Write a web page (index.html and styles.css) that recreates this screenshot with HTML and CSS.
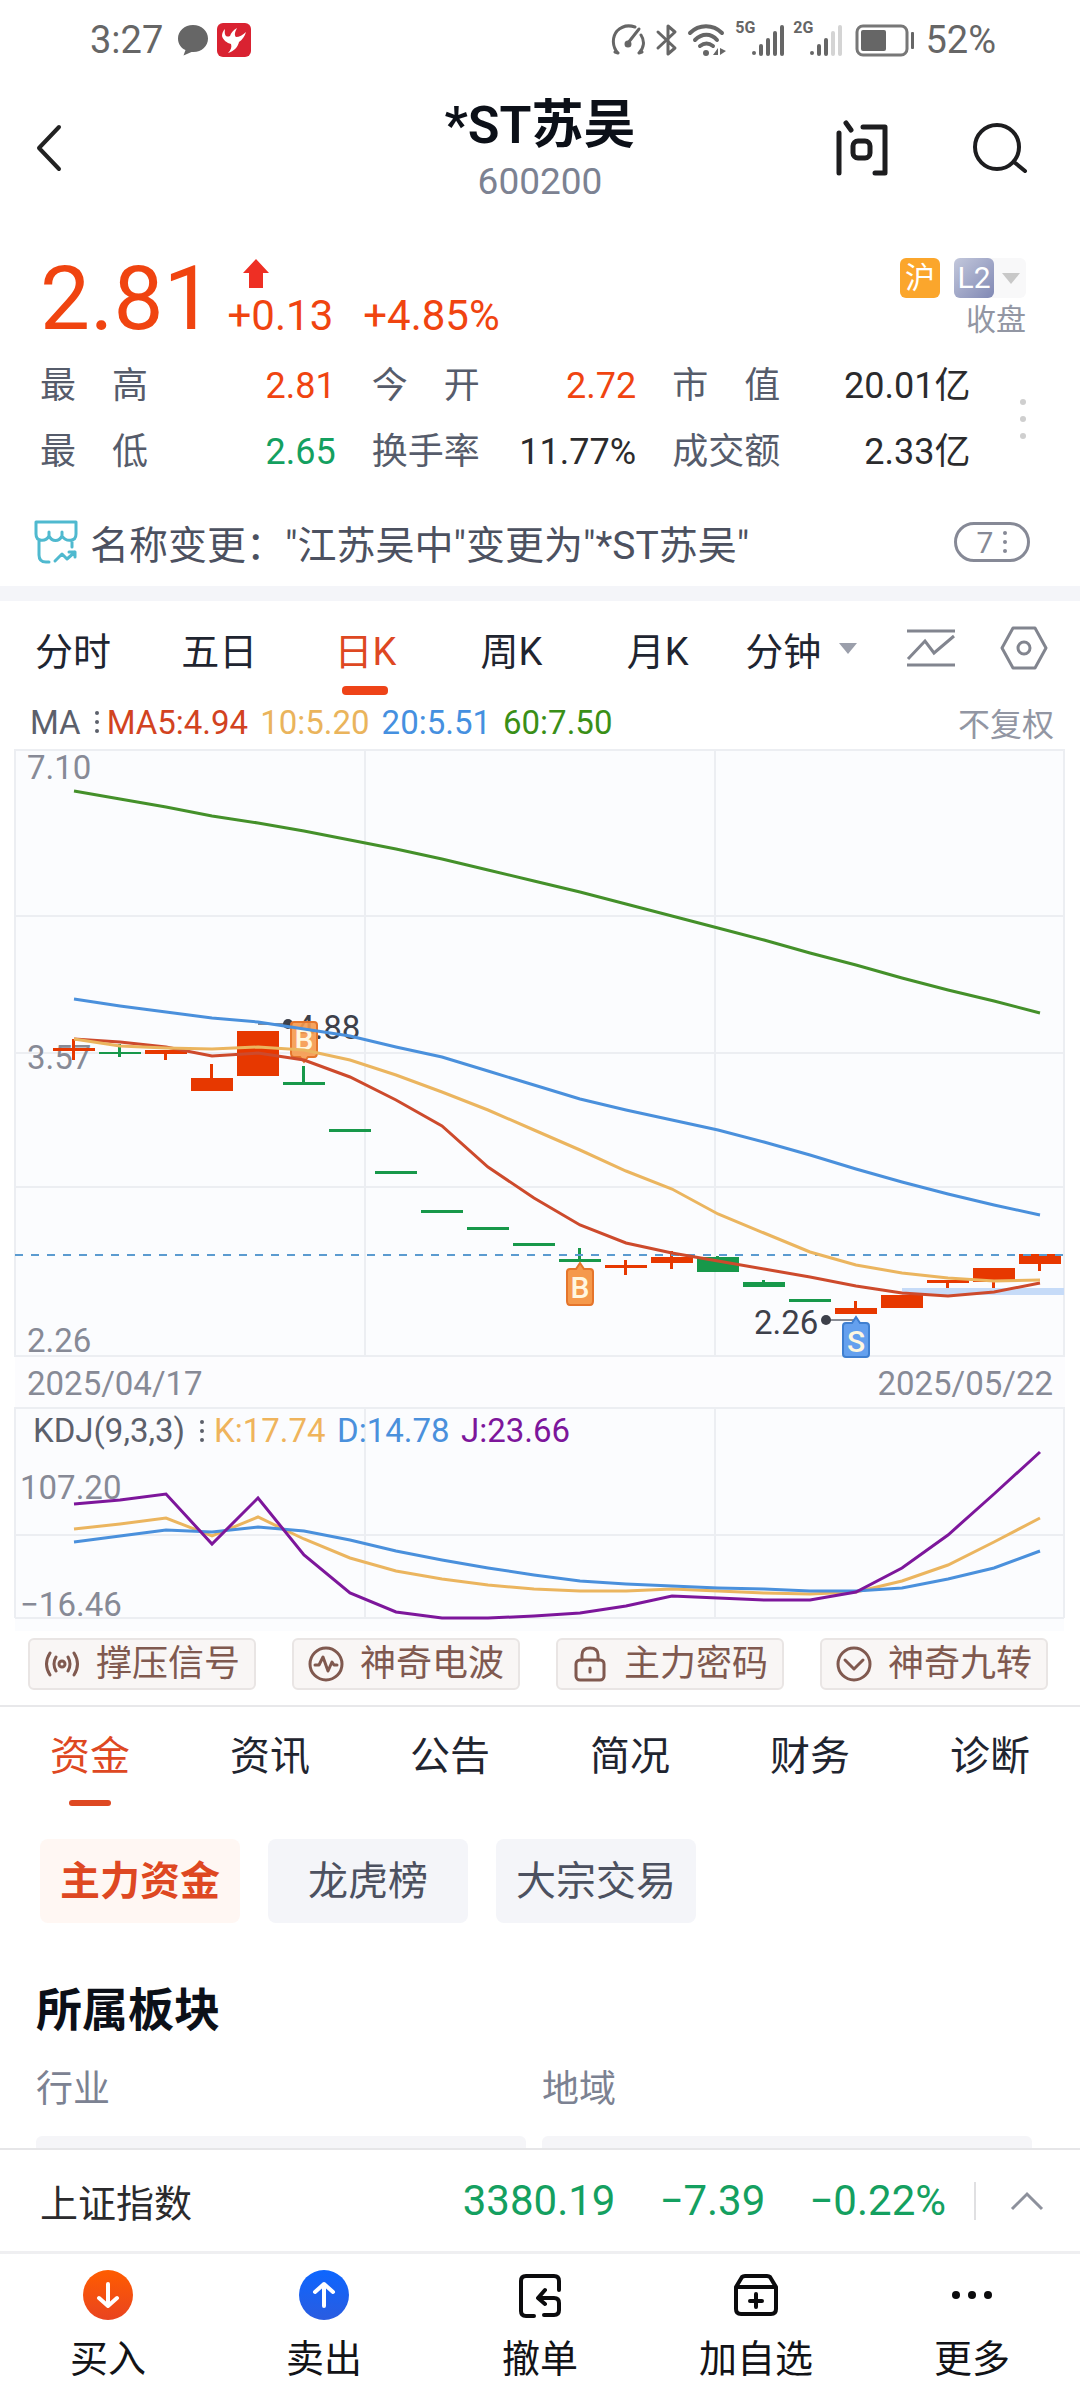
FILE: index.html
```html
<!DOCTYPE html>
<html lang="zh-CN">
<head>
  <meta charset="UTF-8" />
  <meta name="viewport" content="width=device-width, initial-scale=1.0" />
  <title>*ST苏吴 600200</title>
  <link rel="stylesheet" href="styles.css">
</head>
<body>
  <div class="app">
    <div class="status-bar">
      <span class="clock">3:27</span>
      <svg class="bubble" width="32" height="32" viewBox="0 0 32 32"><path d="M16 1C7.500 1 1 7 1 14.500C1 20 4 24 8.500 26L6.500 31.500L14.500 28C24 29 31 22.500 31 14.500C31 7 24.500 1 16 1Z" fill="#666"/></svg>
      <svg width="34" height="34" viewBox="0 0 34 34"><rect width="34" height="34" rx="6" fill="#d92231"/><path d="M8 6C7 12 9 15 13 13C14 10 16 7 20 5C18 9 17 12 19 14C22 14 26 12 29 9C28 13 25 17 22 19C21 24 17 28 11 30C14 27 15 24 14 21C10 20 6 17 5 13C5 10 6 8 8 6Z" fill="#fff"/></svg>

      <div class="status-icons">
        <svg class="gauge" width="34" height="34" viewBox="0 0 34 34" fill="none" stroke="#666" stroke-width="3" stroke-linecap="round"><path d="M7 30C1 24 1 14 6 8C11 3 18 2 24 4M30 12C34 18 33 25 28 30M7 30L4 29M28 30L31 29"/><path d="M17 20L28 6"/><circle cx="17" cy="21" r="3" fill="#666" stroke="none"/><circle cx="17" cy="21" r="2"/></svg>
        <svg width="24" height="34" viewBox="0 0 24 34" fill="none" stroke="#666" stroke-width="3" stroke-linejoin="round" stroke-linecap="round"><path d="M3 9L20 25L13 31V3L20 9L3 25"/></svg>
        <svg width="40" height="34" viewBox="0 0 40 34" fill="none" stroke="#666" stroke-width="4" stroke-linecap="round"><path d="M3 10C12 1 26 1 35 10M8 17C15 10 24 10 30 17M13 23C17 20 22 20 26 23"/><circle cx="19" cy="30" r="3" fill="#666" stroke="none"/><path d="M31 25V32H26ZM33 25V32L39 28Z" fill="#666" stroke="none"/></svg>
        <span class="net">5G</span>
        <svg width="34" height="34" viewBox="0 0 34 34" fill="#666"><circle cx="3" cy="30" r="2"/><rect x="8" y="21" width="4" height="12" rx="2"/><rect x="15" y="15" width="4" height="18" rx="2"/><rect x="22" y="8" width="4" height="25" rx="2"/><rect x="29" y="2" width="4" height="31" rx="2"/></svg>
        <span class="net net-second">2G</span>
        <svg width="34" height="34" viewBox="0 0 34 34" fill="#666"><circle cx="3" cy="30" r="2"/><rect x="8" y="21" width="4" height="12" rx="2"/><rect x="15" y="15" width="4" height="18" rx="2"/><rect x="22" y="8" width="4" height="25" rx="2" fill="#d4d4d4"/><rect x="29" y="2" width="4" height="31" rx="2" fill="#d4d4d4"/></svg>
        <svg class="battery" width="60" height="34" viewBox="0 0 60 34"><rect x="2" y="3" width="50" height="29" rx="6" fill="none" stroke="#777" stroke-width="3"/><rect x="6" y="7" width="25" height="21" rx="2" fill="#666"/><rect x="56" y="9" width="3" height="17" rx="1" fill="#666"/></svg>
        <span class="clock">52%</span>
      </div>
    </div>

    <header class="top-bar">
      <button type="button" class="icon-btn" aria-label="返回">
        <svg width="26" height="48" viewBox="0 0 26 48" fill="none" stroke="#222" stroke-width="4" stroke-linecap="round" stroke-linejoin="round"><path d="M23 3L3 24L23 45"/></svg>
      </button>
      <div class="title">
        <h1>*ST苏吴</h1>
        <p>600200</p>
      </div>
      <div class="top-actions">
        <button type="button" class="icon-btn" aria-label="问">
          <svg width="52" height="58" viewBox="0 0 52 58" fill="none" stroke="#1d1d1f" stroke-width="5" stroke-linecap="round" stroke-linejoin="round"><path d="M3 14V54M10 4L15 11M27 8H49V54H39"/><rect x="17" y="22" width="17" height="17" rx="5"/></svg>
        </button>
        <button type="button" class="icon-btn" aria-label="搜索">
          <svg width="56" height="56" viewBox="0 0 56 56" fill="none" stroke="#1d1d1f" stroke-width="4" stroke-linecap="round"><circle cx="25" cy="27" r="22"/><path d="M42 42L53 51"/></svg>
        </button>
      </div>
    </header>

    <main>
      <section class="quote">
        <div class="price-row">
          <span class="price">2.81</span>
          <div class="change">
            <svg width="28" height="32" viewBox="0 0 28 32"><path d="M14 1L27 15H21V30H7V15H1Z" fill="#ee2f24"/></svg>
            <div class="change-values"><span>+0.13</span><span>+4.85%</span></div>
          </div>
          <div class="market">
            <div class="badges">
              <span class="badge badge-sh">沪</span>
              <span class="badge-level"><span class="badge badge-l2">L2</span><i class="caret"></i></span>
            </div>
            <span class="market-state">收盘</span>
          </div>
        </div>
        <div class="stats-row">
          <table class="stats">
            <tr>
              <th>最　高</th><td class="up">2.81</td>
              <th>今　开</th><td class="up">2.72</td>
              <th>市　值</th><td>20.01亿</td>
            </tr>
            <tr>
              <th>最　低</th><td class="down">2.65</td>
              <th>换手率</th><td>11.77%</td>
              <th>成交额</th><td>2.33亿</td>
            </tr>
          </table>
          <div class="more-dots"><i></i><i></i><i></i></div>
        </div>
      </section>

      <section class="notice">
        <svg width="44" height="44" viewBox="0 0 44 44" fill="none" stroke="#4fb9cf" stroke-width="3" stroke-linecap="round" stroke-linejoin="round"><path d="M2 2H42V14C42 22 32 22 28 16V12M28 16C25 22 18 22 15 16V12M15 16C12 22 2 22 2 14V2M5 20V35Q5 42 12 42H15M38 20V27M21 41L28 34L33 39L41 32M35 32H41V37"/></svg>
        <p>名称变更："江苏吴中"变更为"*ST苏吴"</p>
        <button type="button" class="pill">7<span class="dots-v"><i></i><i></i><i></i></span></button>
      </section>

      <nav class="period-tabs">
        <button type="button">分时</button>
        <button type="button">五日</button>
        <button type="button" class="active">日K</button>
        <button type="button">周K</button>
        <button type="button">月K</button>
        <button type="button">分钟<i class="caret"></i></button>
        <button type="button" aria-label="指标">
          <svg width="50" height="40" viewBox="0 0 50 40" fill="none" stroke="#82858f" stroke-width="3"><path d="M1 3H49M1 37H49M2 31L19 13L28 25L48 8"/></svg>
        </button>
        <button type="button" aria-label="设置">
          <svg width="48" height="44" viewBox="0 0 48 44" fill="none" stroke="#82858f" stroke-width="3" stroke-linejoin="round"><path d="M13 2H35L46 22L35 42H13L2 22Z"/><circle cx="24" cy="22" r="6"/></svg>
        </button>
      </nav>

      <section class="chart">
        <div class="legend">
          <span>MA</span><span class="dots-v"><i></i><i></i><i></i></span>
          <span class="ma5">MA5:4.94</span>
          <span class="ma10">10:5.20</span>
          <span class="ma20">20:5.51</span>
          <span class="ma60">60:7.50</span>
          <span class="adjust">不复权</span>
        </div>

        <!-- daily candles, one every 46 units -->
        <svg class="plot" viewBox="0 750 1080 608">
          <rect x="15" y="750" width="1049" height="608" fill="#fbfcfe"/>
          <path class="grid" d="M15 751H1064M15 917H1064M15 1054H1064M15 1188H1064M15 1357H1064M15 750V1358M365 750V1358M715 750V1358M1064 750V1358"/>
          <text class="axis" x="27" y="780">7.10</text>
          <text class="axis" x="27" y="1070">3.57</text>
          <text class="axis" x="27" y="1353">2.26</text>

          <rect x="902" y="1289" width="162" height="7" fill="#c6dbf8"/>
          <path d="M258 1025H288M826 1321H858" stroke="#888b94" stroke-width="2"/>
          <circle cx="288" cy="1025" r="5" fill="#3d404a"/>
          <circle cx="826" cy="1321" r="5" fill="#3d404a"/>
          <text class="mark" x="296" y="1040">4.88</text>
          <text class="mark" x="754" y="1335">2.26</text>

          <g fill="#e73800">
            <path d="M53 1049h42v3h-42zM72 1040h3v21h-3z"/>
            <path d="M145 1051h42v4h-42zM164 1051h3v10h-3z"/>
            <path d="M191 1079h42v13h-42zM210 1065h3v14h-3z"/>
            <path d="M237 1032h42v45h-42z"/>
            <path d="M605 1266h42v3h-42zM624 1261h3v15h-3z"/>
            <path d="M651 1258h42v6h-42zM670 1252h3v18h-3z"/>
            <path d="M835 1309h42v6h-42zM854 1302h3v7h-3z"/>
            <path d="M881 1296h42v13h-42z"/>
            <path d="M927 1281h42v3h-42zM946 1284h3v5h-3z"/>
            <path d="M973 1269h42v14h-42zM992 1283h3v6h-3z"/>
            <path d="M1019 1255h42v10h-42zM1038 1265h3v7h-3z"/>
          </g>
          <g fill="#17984a">
            <path d="M99 1053h42v2h-42zM118 1045h3v13h-3z"/>
            <path d="M283 1083h42v3h-42zM302 1067h3v17h-3z"/>
            <path d="M329 1130h42v3h-42zM375 1172h42v3h-42zM421 1211h42v3h-42zM467 1228h42v3h-42zM513 1244h42v3h-42z"/>
            <path d="M559 1260h42v3h-42zM578 1249h3v12h-3z"/>
            <path d="M697 1258h42v15h-42zM716 1257h3v2h-3z"/>
            <path d="M743 1283h42v5h-42zM762 1281h3v3h-3z"/>
            <path d="M789 1300h42v3h-42z"/>
          </g>
          <path d="M15 1256H1064" stroke="#5b9bd0" stroke-width="2" stroke-dasharray="8 8"/>

          <g stroke="#e5752b" stroke-width="2">
            <path d="M294 1023H314Q317 1023 317 1026V1054Q317 1058 314 1058H308L304 1063L300 1058H294Q291 1058 291 1054V1026Q291 1023 294 1023Z" fill="#f5994c" fill-opacity="0.9"/>
            <path d="M570 1270H576L580 1264L584 1270H590Q593 1270 593 1273V1302Q593 1306 590 1306H570Q567 1306 567 1302V1273Q567 1270 570 1270Z" fill="#f5994c"/>
          </g>
          <path d="M846 1324H852L856 1318L860 1324H866Q869 1324 869 1327V1355Q869 1358 866 1358H846Q843 1358 843 1355V1327Q843 1324 846 1324Z" fill="#64a0ee" stroke="#3f7fd0" stroke-width="2"/>
          <text class="flag" x="304" y="1051">B</text>
          <text class="flag" x="580" y="1299">B</text>
          <text class="flag" x="856" y="1353">S</text>

          <polyline class="line-ma5" points="74,1040 120,1043 166,1048 212,1057 258,1054 304,1061 350,1078 396,1101 442,1127 488,1168 534,1199 580,1226 626,1244 672,1254 718,1262 764,1270 810,1278 856,1287 902,1294 948,1297 994,1293 1040,1284"/>
          <polyline class="line-ma10" points="74,1040 120,1047 166,1049 212,1050 258,1048 304,1051 350,1061 396,1076 442,1093 488,1111 534,1131 580,1151 626,1172 672,1190 718,1215 764,1234 810,1253 856,1266 902,1274 948,1279 994,1282 1040,1281"/>
          <polyline class="line-ma20" points="74,1000 120,1007 166,1013 212,1019 258,1023 304,1030 350,1037 396,1048 442,1058 488,1072 534,1086 580,1100 626,1111 672,1121 718,1131 764,1143 810,1156 856,1170 902,1183 948,1195 994,1206 1040,1216"/>
          <polyline class="line-ma60" points="74,792 120,800 166,808 212,817 258,824 304,832 350,841 396,850 442,860 488,871 534,882 580,893 626,905 672,917 718,929 764,941 810,954 856,966 902,979 948,991 994,1002 1040,1014"/>
        </svg>

        <div class="dates"><span>2025/04/17</span><span>2025/05/22</span></div>

        <svg class="plot" viewBox="0 1408 1080 224">
          <rect x="15" y="1408" width="1049" height="224" fill="#fbfcfe"/>
          <path class="grid" d="M15 1409H1064M15 1536H1064M15 1619H1064M15 1408V1619M365 1408V1619M715 1408V1619M1064 1408V1619"/>
          <text class="legend-text" x="33" y="1443" fill="#5c606b">KDJ(9,3,3)</text>
          <path d="M202 1423V1442" stroke="#5c606b" stroke-width="4" stroke-linecap="round" stroke-dasharray="0 9"/>
          <text class="legend-text" x="214" y="1443" fill="#efb45c">K:17.74</text>
          <text class="legend-text" x="337" y="1443" fill="#4a90dc">D:14.78</text>
          <text class="legend-text" x="461" y="1443" fill="#7d169b">J:23.66</text>
          <text class="axis" x="20" y="1500">107.20</text>
          <text class="axis" x="20" y="1617">−16.46</text>

          <polyline class="line-ma10" points="74,1530 120,1525 166,1519 212,1537 258,1518 304,1540 350,1559 396,1572 442,1580 488,1586 534,1590 580,1592 626,1592 672,1590 718,1592 764,1594 810,1595 856,1593 902,1582 948,1566 994,1543 1040,1519"/>
          <polyline class="line-ma20" points="74,1543 120,1537 166,1531 212,1533 258,1528 304,1532 350,1541 396,1552 442,1561 488,1569 534,1576 580,1582 626,1585 672,1587 718,1589 764,1590 810,1592 856,1592 902,1589 948,1580 994,1569 1040,1552"/>
          <polyline class="line-j" points="74,1505 120,1501 166,1495 212,1545 258,1499 304,1556 350,1594 396,1613 442,1619 488,1619 534,1617 580,1614 626,1607 672,1597 718,1599 764,1601 810,1601 856,1593 902,1569 948,1536 994,1495 1040,1453"/>
        </svg>

        <div class="signals">
          <button type="button">
            <svg width="36" height="36" viewBox="0 0 36 36" fill="none" stroke="#80594f" stroke-width="3" stroke-linecap="round"><circle cx="18" cy="18" r="3"/><path d="M12 11Q8 18 12 25M24 11Q28 18 24 25M6 7Q-1 18 6 29M30 7Q37 18 30 29"/></svg>
            撑压信号
          </button>
          <button type="button">
            <svg width="36" height="36" viewBox="0 0 36 36" fill="none" stroke="#80594f" stroke-width="3" stroke-linecap="round" stroke-linejoin="round"><circle cx="18" cy="18" r="16"/><path d="M7 19H11L15 11L20 25L24 16L26 19H29"/></svg>
            神奇电波
          </button>
          <button type="button">
            <svg width="36" height="36" viewBox="0 0 36 36" fill="none" stroke="#80594f" stroke-width="3" stroke-linecap="round"><rect x="4" y="14" width="28" height="20" rx="4"/><path d="M10 14V9Q10 2 18 2Q26 2 26 9V14M18 22V26"/></svg>
            主力密码
          </button>
          <button type="button">
            <svg width="36" height="36" viewBox="0 0 36 36" fill="none" stroke="#80594f" stroke-width="3" stroke-linecap="round" stroke-linejoin="round"><circle cx="18" cy="18" r="16"/><path d="M9 14L18 23L27 14"/></svg>
            神奇九转
          </button>
        </div>
      </section>

      <nav class="info-tabs">
        <a href="#" class="active">资金</a>
        <a href="#">资讯</a>
        <a href="#">公告</a>
        <a href="#">简况</a>
        <a href="#">财务</a>
        <a href="#">诊断</a>
      </nav>

      <div class="chips">
        <button type="button" class="active">主力资金</button>
        <button type="button">龙虎榜</button>
        <button type="button">大宗交易</button>
      </div>

      <section class="sectors">
        <h2>所属板块</h2>
        <div class="sector-grid">
          <div><h3>行业</h3><div class="sector-card"></div></div>
          <div><h3>地域</h3><div class="sector-card"></div></div>
        </div>
      </section>
    </main>

    <div class="index-bar">
      <span class="index-name">上证指数</span>
      <span>3380.19</span>
      <span>−7.39</span>
      <span>−0.22%</span>
      <button type="button" class="expand" aria-label="展开">
        <svg width="34" height="20" viewBox="0 0 34 20" fill="none" stroke="#8d919c" stroke-width="3"><path d="M2 18L17 3L32 18"/></svg>
      </button>
    </div>

    <nav class="bottom-nav">
      <button type="button">
        <svg width="52" height="52" viewBox="0 0 52 52" fill="none"><defs><linearGradient id="buy" x1="0" y1="0" x2="0" y2="1"><stop offset="0" stop-color="#ff5d00"/><stop offset="1" stop-color="#e94420"/></linearGradient></defs><circle cx="26" cy="26" r="25" fill="url(#buy)"/><path d="M26 15V37M17 29L26 37L35 29" stroke="#fff" stroke-width="4" stroke-linecap="round" stroke-linejoin="round"/></svg>
        买入
      </button>
      <button type="button">
        <svg width="52" height="52" viewBox="0 0 52 52" fill="none"><defs><linearGradient id="sell" x1="0" y1="0" x2="0" y2="1"><stop offset="0" stop-color="#0d66ff"/><stop offset="1" stop-color="#2a5ce0"/></linearGradient></defs><circle cx="26" cy="26" r="25" fill="url(#sell)"/><path d="M26 37V15M17 23L26 15L35 23" stroke="#fff" stroke-width="4" stroke-linecap="round" stroke-linejoin="round"/></svg>
        卖出
      </button>
      <button type="button">
        <svg width="52" height="52" viewBox="0 0 52 52" fill="none" stroke="#0b0b0d" stroke-width="4" stroke-linecap="round" stroke-linejoin="round"><path d="M20 47H12Q7 47 7 42V12Q7 7 12 7H40Q45 7 45 12V21M31 21L24 29L31 35M25 29H40Q45 29 45 34V41Q45 46 40 46H30"/></svg>
        撤单
      </button>
      <button type="button">
        <svg width="52" height="52" viewBox="0 0 52 52" fill="none" stroke="#0b0b0d" stroke-width="4" stroke-linecap="round" stroke-linejoin="round"><path d="M6 18L12 8Q13 7 15 7H37Q39 7 40 8L46 18V40Q46 45 41 45H11Q6 45 6 40ZM6 18H46M26 25V38M20 32H32"/></svg>
        加自选
      </button>
      <button type="button">
        <svg width="52" height="52" viewBox="0 0 52 52" fill="#0b0b0d"><circle cx="10" cy="26" r="4"/><circle cx="26" cy="26" r="4"/><circle cx="42" cy="26" r="4"/></svg>
        更多
      </button>
    </nav>
  </div>
</body>
</html>
```
FILE: styles.css
```css
:root {
  --up: #f04410;
  --down: #14a060;
  --accent: #de4822;
  --text-dark: #1f2530;
  --text-mid: #565c6b;
  --text-light: #9296a3;
  --panel: #f4f5f9;
}

* {
  box-sizing: border-box;
}

body {
  margin: 0;
  font-family: Roboto, "Noto Sans CJK SC", sans-serif;
  background: #fff;
  color: var(--text-dark);
}

h1, h2, h3, p {
  margin: 0;
}

svg {
  display: block;
  flex-shrink: 0;
}

button {
  padding: 0;
  border: none;
  background: none;
  font-family: inherit;
  color: inherit;
  cursor: pointer;
}

.app {
  display: flex;
  flex-direction: column;
  height: 100vh;
}

/* status bar */
.status-bar {
  display: flex;
  align-items: center;
  height: 80px;
  padding: 0 84px 0 90px;
  gap: 8px;
  color: #666;
  flex-shrink: 0;
}

.clock {
  font-size: 38px;
}

.bubble {
  margin-left: 6px;
}

.status-icons {
  display: flex;
  align-items: center;
  gap: 8px;
  margin-left: auto;
}

.gauge {
  margin-right: 2px;
}

.net {
  align-self: flex-start;
  font-size: 16px;
  line-height: 20px;
  font-weight: 700;
  margin-right: -12px;
}

.battery {
  margin: 0 2px 0 4px;
}

/* title bar */
.top-bar {
  display: grid;
  grid-template-columns: 1fr auto 1fr;
  align-items: center;
  height: 136px;
  padding: 0 36px;
  flex-shrink: 0;
}

.icon-btn {
  justify-self: start;
}

.title {
  padding-top: 4px;
  text-align: center;
}

.title h1 {
  font-size: 52px;
  line-height: 64px;
  font-weight: 600;
  color: #0c1018;
}

.title p {
  font-size: 37px;
  line-height: 48px;
  color: #7c8292;
}

.top-actions {
  display: flex;
  align-items: center;
  justify-content: flex-end;
  gap: 84px;
  padding-right: 16px;
}

main {
  flex: 1;
  min-height: 0;
  overflow: hidden;
}

/* quote */
.quote {
  padding: 38px 48px 13px 40px;
}

.price-row {
  display: flex;
  align-items: flex-end;
  height: 88px;
  color: var(--up);
}

.price {
  font-size: 89px;
  line-height: 86px;
}

.change {
  margin-left: 14px;
}

.change svg {
  margin-left: 14px;
}

.change-values {
  display: flex;
  gap: 30px;
  font-size: 42px;
  line-height: 52px;
}

.market {
  margin-left: auto;
  padding-right: 6px;
}

.badges {
  display: flex;
  gap: 14px;
}

.badge {
  width: 40px;
  height: 40px;
  border-radius: 6px;
  color: #fff;
  font-size: 30px;
  line-height: 40px;
  text-align: center;
}

.badge-sh {
  background: #fba62c;
}

.badge-level {
  display: flex;
  align-items: center;
  gap: 8px;
  padding-right: 6px;
  border-radius: 6px;
  background: #f8f8f9;
}

.badge-l2 {
  background: linear-gradient(135deg, #c3c8dc, #8088b4);
}

.caret {
  border: 9px solid transparent;
  border-top: 11px solid #9b9fab;
  border-bottom: none;
}

.badge-level .caret {
  border-top-color: #c8c8c8;
}

.market-state {
  display: block;
  font-size: 30px;
  line-height: 44px;
  text-align: right;
  color: var(--text-light);
}

.stats-row {
  display: flex;
  align-items: center;
  justify-content: space-between;
  margin-top: 11px;
}

.stats {
  width: 935px;
  max-width: 94%;
  border-collapse: collapse;
  table-layout: fixed;
  font-size: 36px;
  line-height: 66px;
}

.stats th {
  width: 108px;
  padding: 0;
  font-weight: 400;
  text-align: left;
  color: var(--text-mid);
  white-space: nowrap;
}

.stats td {
  padding: 0 36px 0 0;
  text-align: right;
  color: #2b2b2d;
  white-space: nowrap;
}

.stats td:nth-child(2) {
  width: 24%;
}

.stats td:last-child {
  padding-right: 2px;
}

.stats .up {
  color: var(--up);
}

.stats .down {
  color: var(--down);
}

.more-dots {
  display: flex;
  flex-direction: column;
  gap: 11px;
  padding-right: 6px;
}

.more-dots i {
  width: 6px;
  height: 6px;
  border-radius: 50%;
  background: #cfcfcf;
}

/* notice */
.notice {
  display: flex;
  align-items: center;
  height: 88px;
  padding: 0 50px 0 34px;
  border-bottom: 15px solid var(--panel);
  box-sizing: content-box;
}

.notice p {
  flex: 1;
  margin-left: 12px;
  font-size: 39px;
  color: #4c5160;
  white-space: nowrap;
}

.pill {
  display: flex;
  align-items: center;
  justify-content: center;
  gap: 10px;
  width: 76px;
  height: 40px;
  border: 3px solid #868996;
  border-radius: 20px;
  font-size: 30px;
  color: #868996;
}

.dots-v {
  display: inline-flex;
  flex-direction: column;
  gap: 5px;
}

.dots-v i {
  width: 4px;
  height: 4px;
  border-radius: 50%;
  background: currentColor;
}

/* period tabs */
.period-tabs {
  display: grid;
  grid-template-columns: repeat(5, 146fr) 141fr 118fr 68fr;
  height: 94px;
  padding-right: 22px;
}

.period-tabs button {
  position: relative;
  display: flex;
  align-items: center;
  justify-content: center;
  gap: 18px;
  font-size: 38px;
}

.period-tabs .active {
  color: var(--accent);
}

.period-tabs .active::after {
  content: "";
  position: absolute;
  left: 50%;
  bottom: 0;
  width: 46px;
  height: 9px;
  margin-left: -23px;
  border-radius: 4px;
  background: #ee4318;
}

/* chart */
.legend {
  display: flex;
  align-items: center;
  gap: 12px;
  height: 54px;
  padding: 0 26px 0 30px;
  font-size: 33px;
  color: #5c606b;
}

.legend .dots-v {
  margin: 0 -4px 0 2px;
}

.ma5 { color: #d2431f; }
.ma10 { color: #eab45c; }
.ma20 { color: #4590e0; }
.ma60 { color: #3a8f17; }

.adjust {
  margin-left: auto;
  font-size: 32px;
  color: var(--text-light);
}

.plot {
  width: 100%;
  overflow: visible;
}

.plot text {
  font-family: Roboto, sans-serif;
  font-size: 33px;
}

.plot .axis {
  fill: #878a96;
}

.plot .mark {
  fill: #3d404a;
}

.plot .flag {
  font-size: 30px;
  font-weight: 500;
  fill: #fff7e0;
  text-anchor: middle;
}

.grid {
  stroke: #eceef2;
  stroke-width: 2;
}

polyline {
  fill: none;
  stroke-width: 3;
}

.line-ma5 { stroke: #cd4a2c; }
.line-ma10 { stroke: #ebb55f; }
.line-ma20 { stroke: #4a90dc; }
.line-ma60 { stroke: #44902a; }
.line-j { stroke: #7d169b; }

.dates {
  display: flex;
  justify-content: space-between;
  margin: 0 15px;
  padding: 4px 12px 0;
  background: #fcfcfe;
  font-size: 33px;
  line-height: 46px;
  color: #878a96;
}

.signals {
  display: grid;
  grid-template-columns: repeat(4, 1fr);
  gap: 36px;
  padding: 7px 32px 15px 28px;
  border-bottom: 2px solid #e8e8ea;
}

.signals button {
  display: flex;
  align-items: center;
  justify-content: center;
  gap: 16px;
  height: 52px;
  border: 2px solid #e9e5e4;
  border-radius: 6px;
  background: #f9f6f5;
  font-size: 36px;
  line-height: 48px;
  color: #80594f;
  white-space: nowrap;
}

/* info tabs */
.info-tabs {
  display: grid;
  grid-template-columns: repeat(6, 1fr);
  height: 100px;
}

.info-tabs a {
  position: relative;
  font-size: 40px;
  line-height: 100px;
  text-align: center;
  text-decoration: none;
  color: var(--text-dark);
}

.info-tabs .active {
  color: var(--accent);
}

.info-tabs .active::after {
  content: "";
  position: absolute;
  left: 50%;
  bottom: 1px;
  width: 42px;
  height: 6px;
  margin-left: -21px;
  border-radius: 3px;
  background: var(--accent);
}

.chips {
  display: flex;
  gap: 28px;
  padding: 32px 40px 0;
}

.chips button {
  width: 200px;
  height: 84px;
  padding-bottom: 6px;
  border-radius: 8px;
  background: var(--panel);
  font-size: 40px;
  color: #4c5160;
}

.chips .active {
  background: #fff7f3;
  font-weight: 700;
  color: var(--accent);
}

.sectors {
  padding: 55px 48px 0 36px;
}

.sectors h2 {
  font-size: 46px;
  line-height: 64px;
  color: #0c1018;
}

.sector-grid {
  display: grid;
  grid-template-columns: repeat(2, 1fr);
  gap: 16px;
  margin-top: 20px;
}

.sectors h3 {
  font-size: 37px;
  line-height: 56px;
  font-weight: 400;
  color: #7c8292;
}

.sector-card {
  height: 160px;
  margin-top: 18px;
  border-radius: 6px;
  background: #f5f5f8;
}

/* index bar */
.index-bar {
  display: flex;
  align-items: center;
  gap: 44px;
  height: 103px;
  padding: 0 36px 0 40px;
  border-top: 2px solid #e6e6e8;
  font-size: 42px;
  color: var(--down);
  flex-shrink: 0;
}

.index-name {
  margin-right: auto;
  font-size: 38px;
  color: #2b2b2d;
}

.expand {
  height: 38px;
  margin-left: -16px;
  padding-left: 34px;
  border-left: 2px solid #e0e0e2;
}

/* bottom nav */
.bottom-nav {
  display: grid;
  grid-template-columns: repeat(5, 1fr);
  height: 149px;
  border-top: 3px solid #efeff1;
  flex-shrink: 0;
}

.bottom-nav button {
  display: flex;
  flex-direction: column;
  align-items: center;
  padding-top: 15px;
  gap: 10px;
  font-size: 38px;
  line-height: 56px;
  color: #121317;
}
```
